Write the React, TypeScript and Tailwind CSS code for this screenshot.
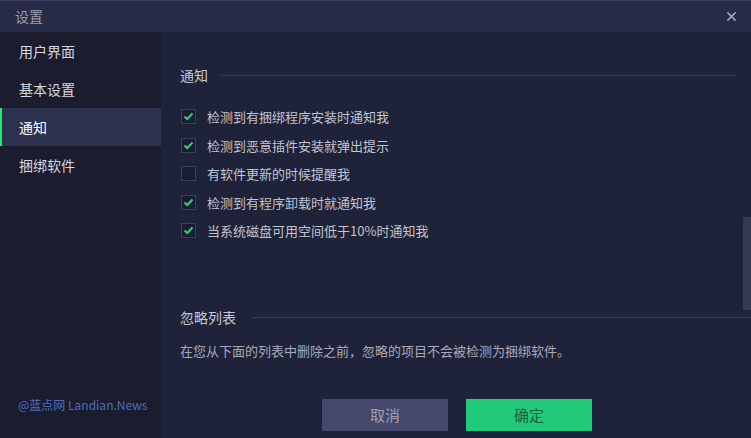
import { X } from 'lucide-react'

const font = { fontFamily: '"Microsoft YaHei", "Noto Sans CJK SC", "Liberation Sans", sans-serif' }

const navItems = ['用户界面', '基本设置', '通知', '捆绑软件']

const options = [
  { label: '检测到有捆绑程序安装时通知我', checked: true },
  { label: '检测到恶意插件安装就弹出提示', checked: true },
  { label: '有软件更新的时候提醒我', checked: false },
  { label: '检测到有程序卸载时就通知我', checked: true },
  { label: '当系统磁盘可用空间低于10%时通知我', checked: true },
]

function Checkbox({ checked }: { checked: boolean }) {
  return (
    <div className="flex h-[15px] w-[15px] items-center justify-center border border-[#3b3f58] bg-[#1a1d30]">
      {checked && (
        <svg width="11" height="9" viewBox="0 0 11 9" fill="none">
          <path d="M1.5 4.5 L4.2 7 L9.5 1.5" stroke="#2fd07c" strokeWidth="2" />
        </svg>
      )}
    </div>
  )
}

function SectionTitle({ title, gap }: { title: string; gap: string }) {
  return (
    <div className={`flex items-center ${gap}`}>
      <span className="text-[14px] leading-5 text-[#c5c7d4]">{title}</span>
      <div className="h-px flex-1 bg-[#3a3d56]" />
    </div>
  )
}

export default function App() {
  return (
    <div className="flex h-[438px] w-[751px] flex-col overflow-hidden bg-[#1f2339]" style={font}>
      <div className="flex h-8 shrink-0 items-center justify-between border-t border-[#3a3d5c] bg-[#282b48] pl-[15px] pr-[12px]">
        <span className="text-[14px] text-[#9a9cb0]">设置</span>
        <X className="size-[15px] text-[#a9abbd]" strokeWidth={2.5} />
      </div>

      <div className="flex min-h-0 flex-1">
        <div className="relative flex w-[161px] shrink-0 flex-col bg-[#1b1d2e]">
          {navItems.map((item) => {
            const active = item === '通知'
            return (
              <div
                key={item}
                className={`flex h-[38px] items-center text-[14px] ${
                  active ? 'border-l-2 border-[#2fe07a] bg-[#2c3150] pl-[17px] text-white' : 'pl-[19px] text-[#d6d7e0]'
                }`}
              >
                {item}
              </div>
            )
          })}
          <div className="absolute bottom-[24px] left-[18px] text-[12px] text-[#4a6fc0]">@蓝点网 Landian.News</div>
        </div>

        <div className="relative flex flex-1 flex-col pl-[19px] pr-[15px]">
          <div className="pt-[33px]">
            <SectionTitle title="通知" gap="gap-[13px]" />
          </div>
          <div className="mt-[24px] flex flex-col gap-[13.5px]">
            {options.map((o) => (
              <div key={o.label} className="flex items-center gap-[11px] pl-px">
                <Checkbox checked={o.checked} />
                <span className="text-[13px] leading-[15px] text-[#c2c4d0]">{o.label}</span>
              </div>
            ))}
          </div>
          <div className="mt-[69px] -mr-[15px]">
            <SectionTitle title="忽略列表" gap="gap-[16px]" />
          </div>
          <p className="mt-[14px] text-[13px] text-[#a7a9b8]">在您从下面的列表中删除之前，忽略的项目不会被检测为捆绑软件。</p>
          <div className="mt-auto flex gap-[18px] pb-[7px] pl-[142px]">
            <button className="h-[32px] w-[126px] bg-[#45486a] text-[15px] text-[#9e9fb3]">取消</button>
            <button className="h-[32px] w-[126px] bg-[#22cb7a] text-[15px] text-[#17603c]">确定</button>
          </div>
          <div className="absolute right-0 top-[185px] h-[93px] w-[8px] bg-[#363a55]" />
        </div>
      </div>
    </div>
  )
}
